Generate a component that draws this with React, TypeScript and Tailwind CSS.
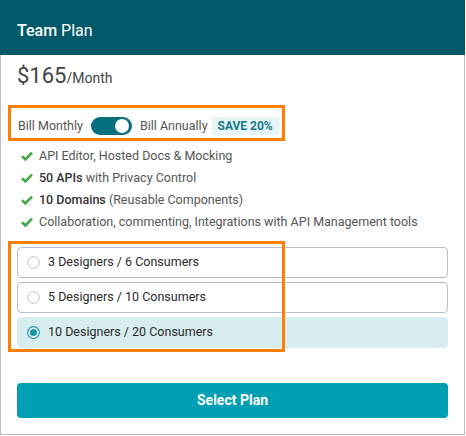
import React, { useState } from 'react';

const features: { strong?: string; rest: string }[] = [
    { rest: 'API Editor, Hosted Docs & Mocking' },
    { strong: '50 APIs', rest: ' with Privacy Control' },
    { strong: '10 Domains', rest: ' (Reusable Components)' },
    { rest: 'Collaboration, commenting, Integrations with API Management tools' },
];

const tiers = ['3 Designers / 6 Consumers', '5 Designers / 10 Consumers', '10 Designers / 20 Consumers'];

const Check: React.FC = () => (
    <svg width="12" height="10" viewBox="0 0 12 10" className="shrink-0">
        <polyline points="1,5.2 4.4,8.4 11,1.6" fill="none" stroke="#3fa847" strokeWidth="2.6" />
    </svg>
);

const Radio: React.FC<{ checked: boolean }> = ({ checked }) => (
    <svg width="13" height="13" viewBox="0 0 13 13" className="shrink-0">
        {checked ? (
            <>
                <circle cx="6.5" cy="6.5" r="5.8" fill="#fff" stroke="#1596a8" strokeWidth="1.2" />
                <circle cx="6.5" cy="6.5" r="3.6" fill="#1596a8" />
            </>
        ) : (
            <circle cx="6.5" cy="6.5" r="5.8" fill="#fff" stroke="#b9bec7" strokeWidth="1" />
        )}
    </svg>
);

const App: React.FC = () => {
    const [annual, setAnnual] = useState(true);
    const [tier, setTier] = useState(2);

    return (
        <div className="relative w-[465px] h-[435px] bg-white font-[Roboto,sans-serif] flex flex-col">
            <div className="h-[55px] bg-[#02596a] text-white text-[16px] leading-[24px] pt-[19px] pl-[17px] shrink-0">
                <span className="font-medium">Team</span> Plan
            </div>

            <div className="flex-1 border-x border-b border-[#bdbdbd] px-[16px] flex flex-col">
                <div className="mt-[7px] leading-[28px] text-[#444]">
                    <span className="text-[22px]">$165</span>
                    <span className="text-[14px]">/Month</span>
                </div>

                <div className="mt-[25px] ml-[1px] h-[18px] flex items-center text-[12.5px] text-[#555]">
                    <span>Bill Monthly</span>
                    <button
                        type="button"
                        onClick={() => setAnnual(!annual)}
                        className={`ml-[8px] w-[41px] h-[18px] rounded-full bg-[#056e7f] flex items-center px-[3px] ${annual ? 'justify-end' : 'justify-start'}`}
                    >
                        <span className="w-[14px] h-[14px] rounded-full bg-white" />
                    </button>
                    <span className="ml-[8px]">Bill Annually</span>
                    <span className="ml-[4px] h-[18px] px-[6px] rounded-[2px] bg-[#e6f5f7] text-[#17798a] text-[12px] font-bold leading-[18px]">
                        SAVE 20%
                    </span>
                </div>

                <ul className="mt-[10px] pl-[4px]">
                    {features.map((f, i) => (
                        <li key={i} className="h-[22px] flex items-center gap-[6px] text-[12.5px] text-[#555]">
                            <Check />
                            <span>
                                {f.strong && <span className="font-medium text-[#333]">{f.strong}</span>}
                                {f.rest}
                            </span>
                        </li>
                    ))}
                </ul>

                <div className="mt-[14px] flex flex-col gap-[4px]">
                    {tiers.map((t, i) => (
                        <label
                            key={t}
                            onClick={() => setTier(i)}
                            className={`h-[31px] flex items-center gap-[8px] pl-[9px] rounded-[4px] border text-[12.5px] text-[#2a2a2a] cursor-pointer ${tier === i ? 'bg-[#d8edf0] border-[#d8edf0]' : 'bg-white border-[#b9bfcc]'}`}
                        >
                            <Radio checked={tier === i} />
                            <span>{t}</span>
                        </label>
                    ))}
                </div>

                <button
                    type="button"
                    className="mt-[35px] h-[35px] rounded-[4px] bg-[#00a0b4] text-white text-[14px] font-bold"
                >
                    Select Plan
                </button>
            </div>

            {/* highlight frames */}
            <div className="absolute left-[8px] top-[105px] w-[277px] h-[36px] border-[3px] border-[#ff8000] pointer-events-none" />
            <div className="absolute left-[8px] top-[241px] w-[277px] h-[111px] border-[3px] border-[#ff8000] pointer-events-none" />
        </div>
    );
};

export default App;
